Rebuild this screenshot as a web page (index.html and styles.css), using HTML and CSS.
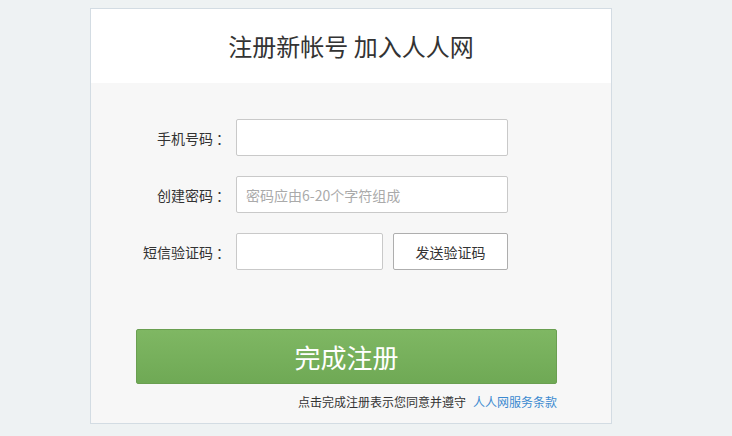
FILE: index.html
```html
<!DOCTYPE html>
<html lang="zh-CN">
<head>
<meta charset="utf-8">
<title>注册新帐号 加入人人网</title>
<link rel="stylesheet" href="styles.css">
</head>
<body>
<div class="card">
  <div class="card-head">注册新帐号 加入人人网</div>
  <div class="card-body">
    <div class="row">
      <label class="label">手机号码<span class="colon">：</span></label>
      <input class="input" type="text">
    </div>
    <div class="row">
      <label class="label">创建密码<span class="colon">：</span></label>
      <input class="input" type="password" placeholder="密码应由6-20个字符组成">
    </div>
    <div class="row">
      <label class="label">短信验证码<span class="colon">：</span></label>
      <input class="input input-short" type="text">
      <button class="send-btn" type="button">发送验证码</button>
    </div>
    <button class="submit-btn" type="button">完成注册</button>
    <p class="terms">点击完成注册表示您同意并遵守<a class="terms-link" href="#">人人网服务条款</a></p>
  </div>
</div>
</body>
</html>
```

FILE: styles.css
```css
* { box-sizing: border-box; }

html, body {
  margin: 0;
  padding: 0;
  background: #eef2f3;
  font-family: "Noto Sans CJK SC", "Noto Sans", sans-serif;
  color: #333;
}

.card {
  margin: 8px 0 0 90px;
  width: 522px;
  border: 1px solid #d3dce3;
  background: #f7f7f7;
}

.card-head {
  height: 74px;
  line-height: 74px;
  background: #fff;
  text-align: center;
  font-size: 24px;
  color: #333;
}

.card-body {
  padding: 36px 0 13px 0;
}

.row {
  display: flex;
  align-items: center;
  height: 37px;
  margin-bottom: 20px;
}

.row:last-of-type {
  margin-bottom: 0;
}

.label {
  width: 136px;
  margin-right: 9px;
  text-align: right;
  font-size: 14px;
  color: #333;
  white-space: nowrap;
}

.colon {
  margin-left: 3px;
  margin-right: -3px;
}

.input {
  width: 272px;
  height: 37px;
  border: 1px solid #c9c9c9;
  border-radius: 2px;
  background: #fff;
  padding: 0 9px;
  font-family: inherit;
  font-size: 14px;
  color: #333;
  outline: none;
}

.input::placeholder {
  color: #aaa;
}

.input-short {
  width: 147px;
}

.send-btn {
  width: 115px;
  height: 37px;
  margin-left: 10px;
  border: 1px solid #aeaeae;
  border-radius: 2px;
  background: #fff;
  font-family: inherit;
  font-size: 14px;
  color: #333;
  padding: 0;
}

.submit-btn {
  display: block;
  width: 421px;
  height: 55px;
  margin: 59px 0 0 45px;
  border: 1px solid #6a9f51;
  border-radius: 2px;
  background: linear-gradient(#7fb763, #6fa955);
  color: #fff;
  font-family: inherit;
  font-size: 26px;
  padding: 0;
}

.terms {
  width: 466px;
  margin: 10px 0 0 0;
  text-align: right;
  font-size: 12px;
  line-height: 16px;
  color: #333;
}

.terms-link {
  margin-left: 7px;
  color: #3b8ad0;
  text-decoration: none;
}
```
